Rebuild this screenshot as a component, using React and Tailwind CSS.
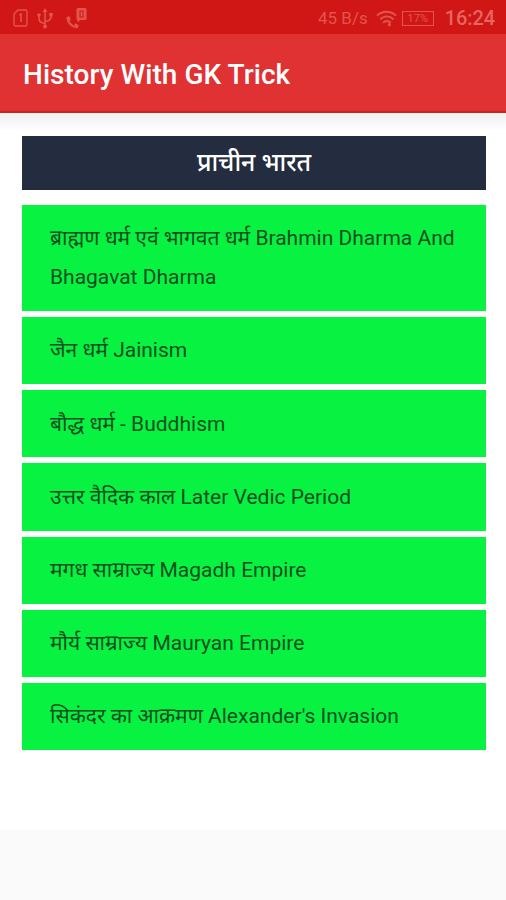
import React from 'react';

const topics = [
    { id: 1, title: 'ब्राह्मण धर्म एवं भागवत धर्म Brahmin Dharma And Bhagavat Dharma' },
    { id: 2, title: 'जैन धर्म Jainism' },
    { id: 3, title: 'बौद्ध धर्म - Buddhism' },
    { id: 4, title: 'उत्तर वैदिक काल Later Vedic Period' },
    { id: 5, title: 'मगध साम्राज्य Magadh Empire' },
    { id: 6, title: 'मौर्य साम्राज्य Mauryan Empire' },
    { id: 7, title: "सिकंदर का आक्रमण Alexander's Invasion" },
];

const SimIcon = () => (
    <svg className="w-[15px] h-[18px]" viewBox="0 0 15 18" fill="none" stroke="currentColor" strokeWidth="1.4">
        <path d="M5 1h7.5a1.5 1.5 0 0 1 1.5 1.5v13a1.5 1.5 0 0 1-1.5 1.5h-10A1.5 1.5 0 0 1 1 15.5V5z" />
        <path d="M6.5 6l1.5-.8V13" strokeWidth="1.6" />
    </svg>
);

const UsbIcon = () => (
    <svg className="w-[18px] h-[21px]" viewBox="0 0 18 21" fill="none" stroke="currentColor" strokeWidth="1.6">
        <path d="M9 3v15M9 15.5c-4-.5-6-2.500-6-5V8M9 13.500c4-.5 6-2 6-4.500V7" />
        <path d="M9 0l2.500 4h-5z" fill="currentColor" stroke="none" />
        <circle cx="9" cy="18.500" r="2" fill="currentColor" stroke="none" />
        <circle cx="3" cy="7" r="1.800" fill="currentColor" stroke="none" />
        <path d="M13.300 5h3.400v3.400h-3.400z" fill="currentColor" stroke="none" />
    </svg>
);

const MissedCallIcon = () => (
    <svg className="w-[21px] h-[21px]" viewBox="0 0 21 21" fill="none" stroke="currentColor">
        <path d="M1.500 10c.3 4.500 4.500 9 9.500 9.500" strokeWidth="2.200" />
        <path d="M0 9.500L3.500 8l1.200 4-2 1.500zM8 17l1.500-1.800 3.200 2-1 3z" fill="currentColor" stroke="none" />
        <rect x="10.500" y="0" width="10" height="12" rx="1.500" fill="currentColor" stroke="none" />
        <path d="M11.500 11v3.500l4-3.500z" fill="currentColor" stroke="none" />
        <rect x="14" y="3" width="3" height="6" stroke="#d01716" strokeWidth="1" />
    </svg>
);

const WifiIcon = () => (
    <svg className="w-[21px] h-[17px]" viewBox="0 0 22 17" fill="none" stroke="currentColor" strokeWidth="2">
        <path d="M1 5.500C7 0 15 0 21 5.500" />
        <path d="M4.500 9.500C8 5.500 14 5 18.500 9.500" />
        <path d="M7.500 13c2.200-2.500 5.500-2.500 8 0" />
        <circle cx="14" cy="15" r="1.700" fill="currentColor" stroke="none" />
    </svg>
);

const StatusBar = () => (
    <div className="flex h-[34px] items-center justify-between bg-[#d01716] pl-[13px] pr-[11px] pt-[2px] text-[#e3544d]">
        <div className="flex items-center">
            <SimIcon />
            <span className="ml-[8px] flex"><UsbIcon /></span>
            <span className="ml-[12px] flex"><MissedCallIcon /></span>
        </div>
        <div className="flex items-center">
            <span className="text-[17px] leading-none">45 B/s</span>
            <span className="ml-[8px] flex"><WifiIcon /></span>
            <span className="ml-[5px] flex h-[15px] w-[32px] items-center justify-center border border-current text-[11px] leading-none">17%</span>
            <span className="ml-[11px] text-[20px] font-medium leading-none tracking-[-0.1px] text-[#e8655e]">16:24</span>
        </div>
    </div>
);

const TopicRow = ({ topic }) => (
    <li className="bg-[#08f341] px-[28px] pb-[13.4px] pt-[14.4px] text-[21px] leading-[39.4px] text-[#0b4f22]">
        {topic.title}
    </li>
);

const App = () => {
    return (
        <div className="flex h-[900px] w-[506px] flex-col overflow-hidden bg-[#fafafa] font-['Roboto','Noto_Sans',sans-serif]">
            <StatusBar />
            <header className="flex h-[79px] shrink-0 items-center border-b-2 border-[#cc2222] bg-[#e03232] pl-[23px] pt-[5px]">
                <h1 className="text-[28px] font-medium leading-none tracking-[0.05px] text-white">History With GK Trick</h1>
            </header>
            <main className="h-[717px] shrink-0 bg-white bg-linear-to-b from-[#f0f0f0] to-white to-[18px] pl-[22px] pr-[20px] pt-[23px]">
                <h2 className="h-[54px] bg-[#242c40] text-center text-[25px] font-medium leading-[54px] tracking-[-0.1px] text-white">प्राचीन भारत</h2>
                <ul className="mt-[14.5px] flex flex-col gap-[6px]">
                    {topics.map(topic => (
                        <TopicRow key={topic.id} topic={topic} />
                    ))}
                </ul>
            </main>
        </div>
    );
};

export default App;
